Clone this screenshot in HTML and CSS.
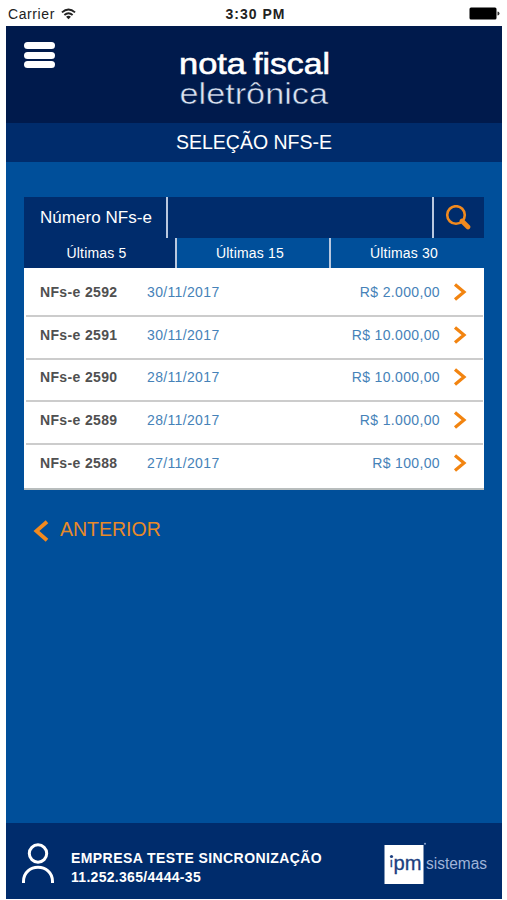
FILE: index.html
```html
<!DOCTYPE html>
<html lang="pt-BR">
<head>
  <meta charset="UTF-8">
  <title>Nota Fiscal Eletrônica</title>
  <link rel="stylesheet" href="styles.css">
</head>
<body>
  <div class="status-bar">
    <div class="carrier">
      <span>Carrier</span>
      <svg width="15" height="12" viewBox="0 0 16 12" fill="none" stroke="#222" stroke-width="2">
        <path d="M1 4.3Q8-1.8 15 4.3M3.6 7Q8 3.2 12.4 7"/>
        <path d="M8 11.5L5.4 8.8Q8 6.8 10.6 8.8z" fill="#222" stroke="none"/>
      </svg>
    </div>
    <div class="time">3:30 PM</div>
    <svg class="battery" width="31" height="13" viewBox="0 0 31 13">
      <rect x="0.5" y="0.5" width="27" height="12" rx="1.5" fill="#000"/>
      <path d="M28.5 4.5q2 0 2 2t-2 2z" fill="#333"/>
    </svg>
  </div>

  <div class="app">
    <header class="header">
      <button class="menu-btn" aria-label="Menu"><i></i><i></i><i></i></button>
      <svg class="logo" width="156" height="64" viewBox="0 0 156 64">
        <text class="logo-top" x="3" y="28" textLength="67" lengthAdjust="spacingAndGlyphs">nota</text>
        <text class="logo-top" x="77" y="28" textLength="77" lengthAdjust="spacingAndGlyphs">fiscal</text>
        <text class="logo-bottom" x="3.5" y="58" textLength="148.5" lengthAdjust="spacingAndGlyphs">eletrônica</text>
      </svg>
    </header>
    <h1 class="title">SELEÇÃO NFS-E</h1>

    <main class="content">
      <div class="search-bar">
        <label for="numero">Número NFs-e</label>
        <input type="text" id="numero">
        <button class="search-btn" aria-label="Buscar">
          <svg width="26" height="26" viewBox="0 0 26 26" fill="none" stroke="#f28a1e">
            <circle cx="11" cy="10" r="8.8" stroke-width="2.6"/>
            <path d="M17 16L23 22" stroke-width="4.6" stroke-linecap="round"/>
          </svg>
        </button>
      </div>

      <div class="tabs">
        <button class="tab active">Últimas 5</button>
        <button class="tab">Últimas 15</button>
        <button class="tab">Últimas 30</button>
      </div>

      <ul class="list">
        <li><b>NFs-e 2592</b><span class="date">30/11/2017</span><span class="value">R$ 2.000,00</span>
          <svg class="arrow" viewBox="0 0 14 18"><path d="M2 1.5L11 9L2 16.5"/></svg></li>
        <li><b>NFs-e 2591</b><span class="date">30/11/2017</span><span class="value">R$ 10.000,00</span>
          <svg class="arrow" viewBox="0 0 14 18"><path d="M2 1.5L11 9L2 16.5"/></svg></li>
        <li><b>NFs-e 2590</b><span class="date">28/11/2017</span><span class="value">R$ 10.000,00</span>
          <svg class="arrow" viewBox="0 0 14 18"><path d="M2 1.5L11 9L2 16.5"/></svg></li>
        <li><b>NFs-e 2589</b><span class="date">28/11/2017</span><span class="value">R$ 1.000,00</span>
          <svg class="arrow" viewBox="0 0 14 18"><path d="M2 1.5L11 9L2 16.5"/></svg></li>
        <li><b>NFs-e 2588</b><span class="date">27/11/2017</span><span class="value">R$ 100,00</span>
          <svg class="arrow" viewBox="0 0 14 18"><path d="M2 1.5L11 9L2 16.5"/></svg></li>
      </ul>

      <button class="back-btn">
        <svg width="16" height="22" viewBox="0 0 16 22" fill="none" stroke="#f28a1e" stroke-width="3.8"><path d="M14 1.8L3.4 11L14 20.2"/></svg>
        <span>ANTERIOR</span>
      </button>
    </main>

    <footer class="footer">
      <svg class="user-icon" width="34" height="42" viewBox="0 0 34 42" fill="none" stroke="#fff" stroke-width="3">
        <circle cx="17" cy="10.5" r="8.7"/>
        <path d="M2.5 40V38.5C2.5 19.5 31.5 19.5 31.5 38.5V40"/>
      </svg>
      <div class="company">
        <div class="company-name">EMPRESA TESTE SINCRONIZAÇÃO</div>
        <div class="company-doc">11.252.365/4444-35</div>
      </div>
      <svg class="ipm" width="110" height="44" viewBox="0 0 110 44">
        <rect x="0.5" y="3" width="39" height="39" fill="#fff"/>
        <circle cx="41" cy="1.8" r="1" fill="#8ea6cf"/>
        <circle cx="7.5" cy="14.5" r="1.6" fill="#1c3f80"/>
        <text class="ipm-text" x="5.5" y="25" font-size="13">ı</text>
        <text class="ipm-text" x="9.5" y="28" font-size="20" textLength="28" lengthAdjust="spacingAndGlyphs">pm</text>
        <text class="sistemas" x="42" y="27" textLength="61" lengthAdjust="spacingAndGlyphs">sistemas</text>
      </svg>
    </footer>
  </div>
</body>
</html>
```

FILE: styles.css
```css
* {
  box-sizing: border-box;
}

body {
  margin: 0;
  height: 900px;
  background: #fff;
  font-family: "Liberation Sans", Arial, sans-serif;
  overflow: hidden;
}

button {
  font-family: inherit;
  border: 0;
  padding: 0;
  background: none;
  cursor: pointer;
}

svg {
  display: block;
}

/* barra de status */
.status-bar {
  display: grid;
  grid-template-columns: 1fr auto 1fr;
  align-items: center;
  height: 26px;
  padding: 1px 7px 0 8px;
  color: #222;
}

.carrier {
  display: flex;
  align-items: center;
  gap: 6px;
  font-size: 14px;
  letter-spacing: 0.6px;
}

.time {
  padding-left: 3px;
  font-size: 14px;
  font-weight: bold;
  letter-spacing: 1px;
}

.battery {
  justify-self: end;
}

.app {
  display: flex;
  flex-direction: column;
  width: 496px;
  height: 873px;
  margin-left: 6px;
  background: #004f9a;
}

.header {
  display: flex;
  align-items: flex-start;
  height: 97px;
  background: #001a4c;
}

.menu-btn {
  display: flex;
  flex-direction: column;
  gap: 2.5px;
  width: 31px;
  margin: 16px 0 0 18px;
}

.menu-btn i {
  height: 7px;
  border-radius: 4px;
  background: #fff;
}

.logo {
  margin: 20px 0 0 121px;
}

.logo-top {
  font-size: 30px;
  fill: #fff;
  stroke: #fff;
  stroke-width: 0.6px;
}

.logo-bottom {
  font-size: 30px;
  fill: #dbe3f3;
  stroke: #001a4c;
  stroke-width: 0.5px;
}

.title {
  height: 39px;
  margin: 0;
  background: #002c6c;
  color: #fff;
  font-size: 19.5px;
  font-weight: normal;
  line-height: 38px;
  text-align: center;
}

.content {
  flex: 1;
  padding: 35px 18px 0;
}

/* busca */
.search-bar {
  display: flex;
  height: 41px;
  background: #002c6c;
  color: #fff;
}

.search-bar label {
  width: 144px;
  padding-left: 16px;
  border-right: 2px solid #b9c8df;
  font-size: 17px;
  line-height: 41px;
  letter-spacing: 0.05px;
  white-space: nowrap;
}

.search-bar input {
  flex: 1;
  min-width: 0;
  border: 0;
  background: none;
  color: #fff;
  font-size: 17px;
}

.search-btn {
  width: 52px;
  padding-left: 11px;
  border-left: 2px solid #b9c8df;
}

.tabs {
  display: grid;
  grid-template-columns: 153px 154px 153px;
  height: 30px;
}

.tab {
  padding: 0 6px 0 0;
  border-right: 2px solid #b9c8df;
  color: #fff;
  font-size: 14px;
  letter-spacing: 0.2px;
}

.tab:last-child {
  border-right: 0;
  padding-right: 7px;
}

.tab.active {
  background: #002c6c;
}

/* lista de notas */
.list {
  margin: 0;
  padding: 6px 1px 0 2px;
  list-style: none;
  background: #fff;
  border-bottom: 2px solid #b8bdbd;
}

.list li {
  display: flex;
  align-items: center;
  height: 42.8px;
  padding: 0 16px 5px 14px;
  border-bottom: 2px solid #ccc;
  font-size: 14px;
  letter-spacing: 0.35px;
}

.list li:last-child {
  border-bottom-color: transparent;
}

.list b {
  width: 107px;
  color: #505050;
}

.date,
.value {
  color: #4682b8;
}

.value {
  margin-left: auto;
}

.arrow {
  width: 14px;
  height: 18px;
  margin-left: 13px;
  fill: none;
  stroke: #f28410;
  stroke-width: 3.2;
}

.back-btn {
  display: flex;
  align-items: center;
  gap: 11px;
  margin: 28px 0 0 9px;
  color: #e88a28;
  font-size: 19.5px;
}

.back-btn span {
  padding-bottom: 3px;
}

.footer {
  display: flex;
  align-items: flex-start;
  height: 76px;
  background: #002c6c;
  color: #fff;
}

.user-icon {
  margin: 20px 0 0 15px;
}

.company {
  margin: 26px 0 0 16px;
  font-size: 14px;
  font-weight: bold;
  line-height: 18.5px;
  white-space: nowrap;
}

.company-name {
  letter-spacing: 0.42px;
}

.company-doc {
  letter-spacing: 0.3px;
}

.ipm {
  margin: 19px 8px 0 auto;
}

.ipm-text {
  fill: #1c3f80;
  stroke: #1c3f80;
  stroke-width: 0.3px;
}

.sistemas {
  font-size: 16px;
  fill: #9fb3d8;
}
```
